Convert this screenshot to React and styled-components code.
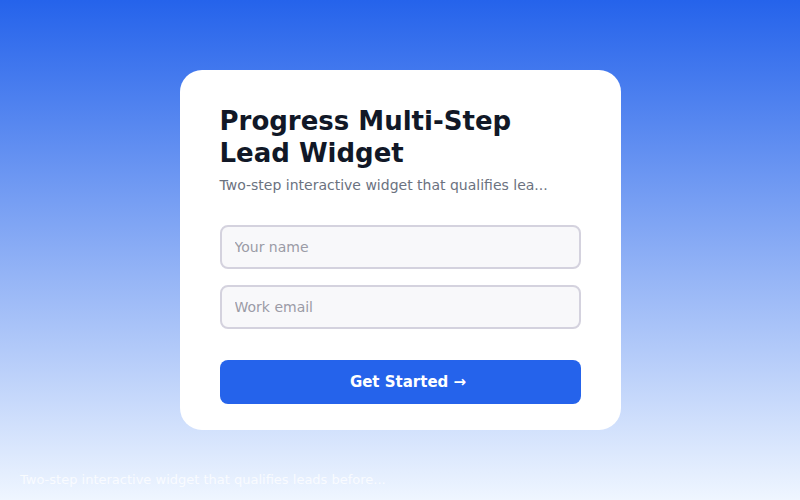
import React from "react";
import styled, { createGlobalStyle } from "styled-components";

const GlobalStyle = createGlobalStyle`
  * {
    box-sizing: border-box;
  }
  html, body, #root {
    margin: 0;
    padding: 0;
    width: 100%;
    height: 100%;
  }
  body {
    font-family: "DejaVu Sans", Verdana, sans-serif;
  }
`;

const Page = styled.div`
  position: relative;
  width: 100%;
  height: 100vh;
  display: flex;
  align-items: center;
  justify-content: center;
  background: linear-gradient(180deg, #2563eb 0%, #eff6ff 100%);
  overflow: hidden;
`;

const Card = styled.div`
  width: 441px;
  height: 360px;
  background: #ffffff;
  border-radius: 22px;
  padding: 35px 40px 26px;
  display: flex;
  flex-direction: column;
`;

const Title = styled.h1`
  margin: 0;
  font-size: 26px;
  line-height: 32px;
  font-weight: 700;
  color: #111827;
`;

const Subtitle = styled.p`
  margin: 6px 0 29px;
  font-size: 14px;
  line-height: 21px;
  color: #6b7280;
`;

const Form = styled.form`
  display: flex;
  flex-direction: column;
  gap: 16px;
`;

const Input = styled.input`
  width: 100%;
  height: 44px;
  padding: 0 13px;
  border: 2px solid #d4d2de;
  border-radius: 8px;
  background: #f8f8fa;
  font-family: inherit;
  font-size: 14px;
  color: #111827;
  outline: none;

  &::placeholder {
    color: #9b9ba6;
  }
`;

const Button = styled.button`
  margin-top: 15px;
  width: 100%;
  height: 44px;
  padding: 0 0 0 16px;
  border: none;
  border-radius: 8px;
  background: #2563eb;
  color: #ffffff;
  font-family: inherit;
  font-size: 15px;
  font-weight: 700;
  cursor: pointer;
`;

const Caption = styled.div`
  position: absolute;
  left: 20px;
  bottom: 10px;
  font-size: 13px;
  line-height: 20px;
  color: rgba(255, 255, 255, 0.75);
`;

const App = () => {
  return (
    <>
      <GlobalStyle />
      <Page>
        <Card>
          <Title>Progress Multi-Step Lead Widget</Title>
          <Subtitle>Two-step interactive widget that qualifies lea...</Subtitle>
          <Form onSubmit={(e) => e.preventDefault()}>
            <Input type="text" placeholder="Your name" />
            <Input type="email" placeholder="Work email" />
            <Button type="submit">Get Started →</Button>
          </Form>
        </Card>
        <Caption>Two-step interactive widget that qualifies leads before...</Caption>
      </Page>
    </>
  );
};

export default App;
